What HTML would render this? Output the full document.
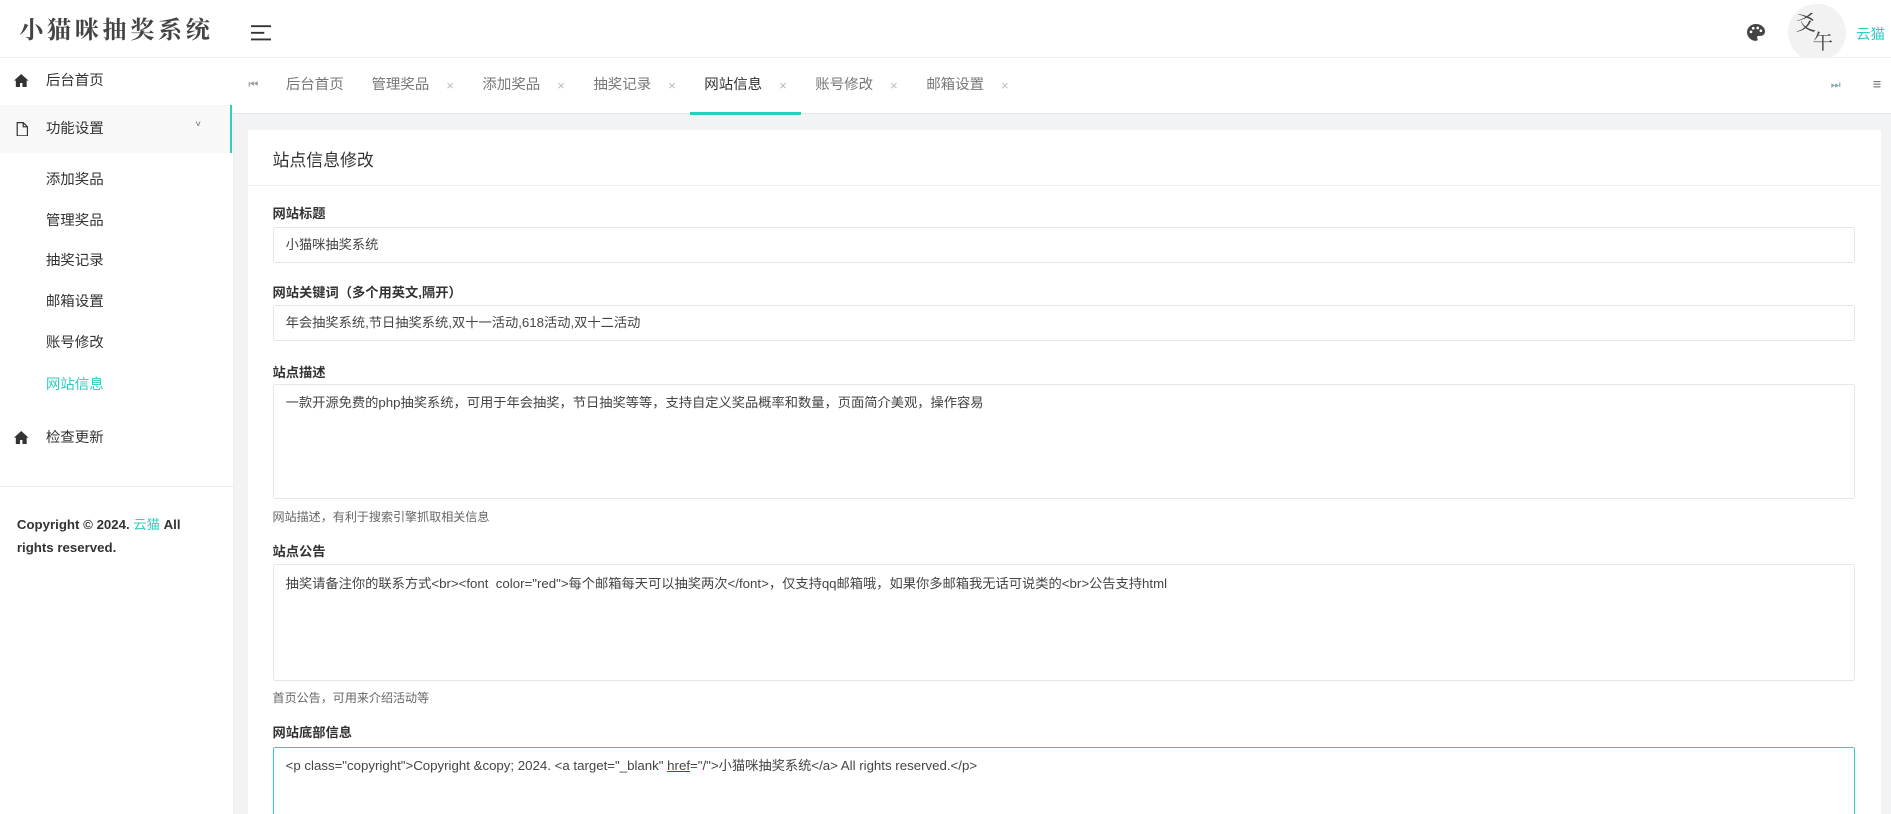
<!DOCTYPE html>
<html><head><meta charset="utf-8"><style>
html,body{margin:0;padding:0;width:1891px;height:814px;overflow:hidden;background:#f2f3f5}
#w{zoom:1.206;width:1568px;height:675px;position:relative;font-family:"Liberation Sans","Noto Sans CJK SC",sans-serif;color:#333;font-size:12px}
.abs{position:absolute}
#side{left:0;top:0;width:193px;height:675px;background:#fff;border-right:1px solid #eee}
.logo{left:0;top:0;width:193px;height:47px;border-bottom:1px solid #f0f0f0;font-family:"Noto Serif CJK SC",serif;font-weight:bold;font-size:20px;letter-spacing:3px;line-height:47px;text-align:center;color:#444}
.mi{left:0;width:193px;height:40px;line-height:40px}
.mi span{position:absolute;left:38px}
.sub{left:38px;line-height:16px}
.tabs{left:193px;top:48px;width:1375px;height:46px;background:#fff;border-bottom:1px solid #e6e6e6}
.t{top:0;line-height:46px;color:#777;font-size:12px}
.x{top:0;line-height:46px;color:#bbb;font-size:11px}
.card{left:206px;top:108px;width:1354px;height:580px;background:#fff}
.lab{left:226px;font-weight:bold;font-size:11px;color:#333}
.inp{left:226px;width:1312px;border:1px solid #e6e6e6;border-radius:2px;background:#fff;box-sizing:border-box;padding:0 10px;font-size:11px;color:#444}
.help{left:226px;font-size:10px;color:#666}
</style></head><body><div id="w">
<div id="side" class="abs">
 <div class="abs logo">小猫咪抽奖系统</div>
 <div class="abs mi" style="top:47px"><svg class="abs" style="left:12px;top:14px" width="12" height="11" viewBox="0 0 12 11"><path d="M6 0L0 5.5h1.5V11h3.5V7.5h2V11h3.5V5.5H12z" fill="#333"/></svg><span>后台首页</span></div>
 <div class="abs mi" style="top:87px;background:#f8f8f8;border-right:2px solid #2ecdbf;width:191px"><svg class="abs" style="left:13px;top:14px" width="10" height="12" viewBox="0 0 10 12"><path d="M1 .5h5l3.5 3.5v7.5H1z M6 .5V4h3.5" fill="none" stroke="#333"/></svg><span>功能设置</span><span style="left:162px;font-size:8px;color:#666;top:-3px">˅</span></div>
 <div class="abs sub" style="top:142px">添加奖品</div>
 <div class="abs sub" style="top:176px">管理奖品</div>
 <div class="abs sub" style="top:209px">抽奖记录</div>
 <div class="abs sub" style="top:243px">邮箱设置</div>
 <div class="abs sub" style="top:277px">账号修改</div>
 <div class="abs sub" style="top:312px;color:#2ecdbf">网站信息</div>
 <div class="abs mi" style="top:343px"><svg class="abs" style="left:12px;top:14px" width="12" height="11" viewBox="0 0 12 11"><path d="M6 0L0 5.5h1.5V11h3.5V7.5h2V11h3.5V5.5H12z" fill="#333"/></svg><span>检查更新</span></div>
 <div class="abs" style="left:0;top:403px;width:193px;border-top:1px solid #eee"></div>
 <div class="abs" style="left:14px;top:426px;font-size:11px;font-weight:bold;line-height:19px;width:150px">Copyright © 2024. <span style="color:#2ecdbf;font-weight:normal">云猫</span> All rights reserved.</div>
</div>
<div class="abs" style="left:193px;top:0;width:1375px;height:47px;background:#fff;border-bottom:1px solid #f0f0f0"></div>
<svg class="abs" style="left:208px;top:21px" width="17" height="13"><path d="M0 1h17M0 6.5h11M0 12h17" stroke="#333" stroke-width="1.6"/></svg>
<svg class="abs" style="left:1449px;top:20px" width="15" height="14" viewBox="0 0 16 15"><path d="M8 0C3.5 0 0 3.2 0 7.3 0 11.4 3.5 15 8 15c1 0 1.5-.6 1.5-1.3 0-.8-.6-1-.6-1.8 0-.8.6-1.3 1.4-1.3H12c2.3 0 4-1.7 4-4C16 3 12.4 0 8 0z" fill="#444"/><circle cx="3.5" cy="7" r="1.2" fill="#fff"/><circle cx="5.5" cy="3.8" r="1.2" fill="#fff"/><circle cx="9.5" cy="3.5" r="1.2" fill="#fff"/><circle cx="12.3" cy="6" r="1.2" fill="#fff"/></svg>
<div class="abs" style="left:1483px;top:3px;width:48px;height:48px;border-radius:50%;background:#f2f2f2;font-family:'Noto Serif CJK SC',serif;font-size:17px;color:#444;line-height:18px"><span class="abs" style="left:6px;top:6px">爻</span><span class="abs" style="left:20px;top:22px">午</span></div>
<div class="abs" style="left:1539px;top:19px;color:#2ecdbf;font-size:12px">云猫</div>
<div class="abs tabs">
 <span class="abs t" style="left:13px;font-size:9px;color:#999">⏮</span>
 <span class="abs t" style="left:44px">后台首页</span>
 <span class="abs t" style="left:115px">管理奖品</span><span class="abs x" style="left:177px">×</span>
 <span class="abs t" style="left:207px">添加奖品</span><span class="abs x" style="left:269px">×</span>
 <span class="abs t" style="left:299px">抽奖记录</span><span class="abs x" style="left:361px">×</span>
 <span class="abs t" style="left:391px;color:#333">网站信息</span><span class="abs x" style="left:453px">×</span>
 <div class="abs" style="left:379px;top:45px;width:92px;height:2px;background:#2ecdbf"></div>
 <span class="abs t" style="left:483px">账号修改</span><span class="abs x" style="left:545px">×</span>
 <span class="abs t" style="left:575px">邮箱设置</span><span class="abs x" style="left:637px">×</span>
 <span class="abs t" style="left:1325px;font-size:9px;color:#8aa">⏭</span>
 <span class="abs t" style="left:1360px;color:#666">≡</span>
</div>
<div class="abs card"></div>
<div class="abs" style="left:206px;top:153px;width:1354px;border-top:1px solid #f0f0f0"></div>
<div class="abs" style="left:226px;top:121px;font-size:14px;color:#333">站点信息修改</div>
<div class="abs lab" style="top:168px">网站标题</div>
<div class="abs inp" style="top:188px;height:30px;line-height:28px">小猫咪抽奖系统</div>
<div class="abs lab" style="top:234px">网站关键词（多个用英文,隔开）</div>
<div class="abs inp" style="top:253px;height:30px;line-height:28px">年会抽奖系统,节日抽奖系统,双十一活动,618活动,双十二活动</div>
<div class="abs lab" style="top:300px">站点描述</div>
<div class="abs inp" style="top:318px;height:96px;padding-top:6px">一款开源免费的php抽奖系统，可用于年会抽奖，节日抽奖等等，支持自定义奖品概率和数量，页面简介美观，操作容易</div>
<div class="abs help" style="top:421px">网站描述，有利于搜索引擎抓取相关信息</div>
<div class="abs lab" style="top:449px">站点公告</div>
<div class="abs inp" style="top:468px;height:97px;padding-top:6px">抽奖请备注你的联系方式&lt;br&gt;&lt;font&nbsp; color="red"&gt;每个邮箱每天可以抽奖两次&lt;/font&gt;，仅支持qq邮箱哦，如果你多邮箱我无话可说类的&lt;br&gt;公告支持html</div>
<div class="abs help" style="top:571px">首页公告，可用来介绍活动等</div>
<div class="abs lab" style="top:599px">网站底部信息</div>
<div class="abs inp" style="top:619px;height:70px;padding-top:6px;border-color:#2ecdbf">&lt;p class="copyright"&gt;Copyright &amp;copy; 2024. &lt;a target="_blank" <u style="text-decoration-color:red">href</u>="/"&gt;小猫咪抽奖系统&lt;/a&gt; All rights reserved.&lt;/p&gt;</div>
</div></body></html>
